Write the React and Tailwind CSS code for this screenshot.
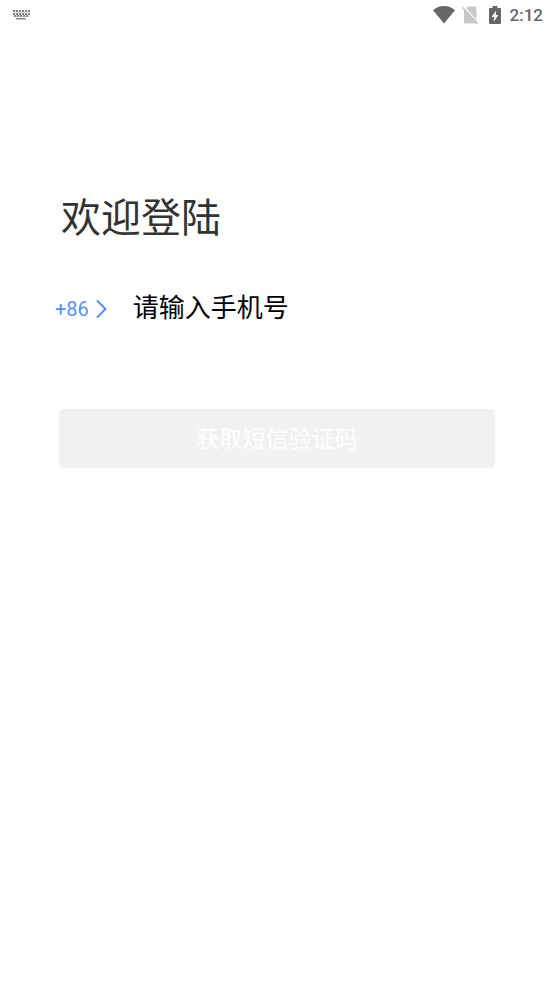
import { useState } from 'react'

function KeyboardIcon() {
  return (
    <svg width="18" height="10" viewBox="0 0 18 10" fill="#8a8a8a" aria-hidden="true">
      <rect x="0" y="0" width="17" height="7" fill="#e4e4e4" />
      {[0, 3, 6, 9, 12, 15].map((x) => <rect key={`a${x}`} x={x} y="0" width="2" height="2" />)}
      {[0, 3, 6, 9, 12, 15].map((x) => <rect key={`b${x}`} x={x} y="3" width="2" height="2" />)}
      {[1, 4, 7, 10, 13].map((x) => <rect key={`c${x}`} x={x} y="5" width="2" height="2" />)}
      <rect x="3" y="8" width="10" height="1.5" />
    </svg>
  )
}

function WifiIcon() {
  return (
    <svg width="22" height="18" viewBox="0 0 22 18" fill="#666666" aria-hidden="true">
      <path d="M11 17.5 0 4.2C3 1.6 6.8 0 11 0s8 1.6 11 4.2z" />
    </svg>
  )
}

function NoSimIcon() {
  return (
    <svg width="16" height="18" viewBox="0 0 16 18" aria-hidden="true">
      <path d="M6 0.5h7.2q1.3 0 1.3 1.3v14.4q0 1.3-1.3 1.3H3.3Q2 17.5 2 16.2V4.5z" fill="#c8c8c8" />
      <path d="M1.2 0.3 16.7 17" stroke="#ffffff" strokeWidth="1.5" />
      <path d="M0.3 1.2 15.5 17.6" stroke="#c2c2c2" strokeWidth="1.5" />
    </svg>
  )
}

function BatteryIcon() {
  return (
    <svg width="12" height="18" viewBox="0 0 12 18" aria-hidden="true">
      <path d="M3.5 0h5v2H11q1 0 1 1v14q0 1-1 1H1q-1 0-1-1V3q0-1 1-1h2.5z" fill="#666666" />
      <path d="M7.2 4.5 2.6 11h2.7l-.6 4.8L9.4 9H6.7z" fill="#ffffff" />
    </svg>
  )
}

function StatusBar() {
  return (
    <header className="flex h-[30px] items-center justify-between pr-[10px] pl-[13px]">
      <KeyboardIcon />
      <div className="flex items-center">
        <WifiIcon />
        <span className="ml-[7px] flex"><NoSimIcon /></span>
        <span className="ml-[11px] flex"><BatteryIcon /></span>
        <time className="ml-[9px] font-[Roboto] text-[17px] leading-[30px] font-medium text-[#666666]">2:12</time>
      </div>
    </header>
  )
}

export default function App() {
  const [phone, setPhone] = useState('')

  return (
    <div className="min-h-screen bg-white font-['Noto_Sans_CJK_SC',sans-serif]">
      <StatusBar />
      <main className="pt-[156px] pr-[58px] pl-[59px]">
        <h1 className="pl-0.5 text-[40px] leading-[58px] text-[#333333]">欢迎登陆</h1>

        <form onSubmit={(e) => e.preventDefault()}>
          <div className="-ml-1 mt-[41px] flex h-[42px] items-center">
            <button type="button" aria-label="+86" className="flex items-center gap-[7px] pt-1.5 text-[#5590fa]">
              <span className="font-[Roboto] text-[20px] leading-[24px]">+86</span>
              <svg width="11" height="20" viewBox="0 0 11 20" fill="none" stroke="currentColor" strokeWidth="2" aria-hidden="true">
                <path d="M1 1.5 9.5 10 1 18.5" />
              </svg>
            </button>
            <input
              type="tel"
              aria-label="请输入手机号"
              value={phone}
              onChange={(e) => setPhone(e.target.value)}
              placeholder="请输入手机号"
              className="ml-[26px] min-w-0 flex-1 text-[26px] leading-[38px] text-black placeholder:text-black focus:outline-none"
            />
          </div>

          <button
            type="submit"
            disabled={!phone}
            className="mt-[82px] h-[59px] w-full rounded-[5px] bg-[#f0f1f3] pb-[3px] text-[23px] leading-[34px] text-white"
          >
            获取短信验证码
          </button>
        </form>
      </main>
    </div>
  )
}
